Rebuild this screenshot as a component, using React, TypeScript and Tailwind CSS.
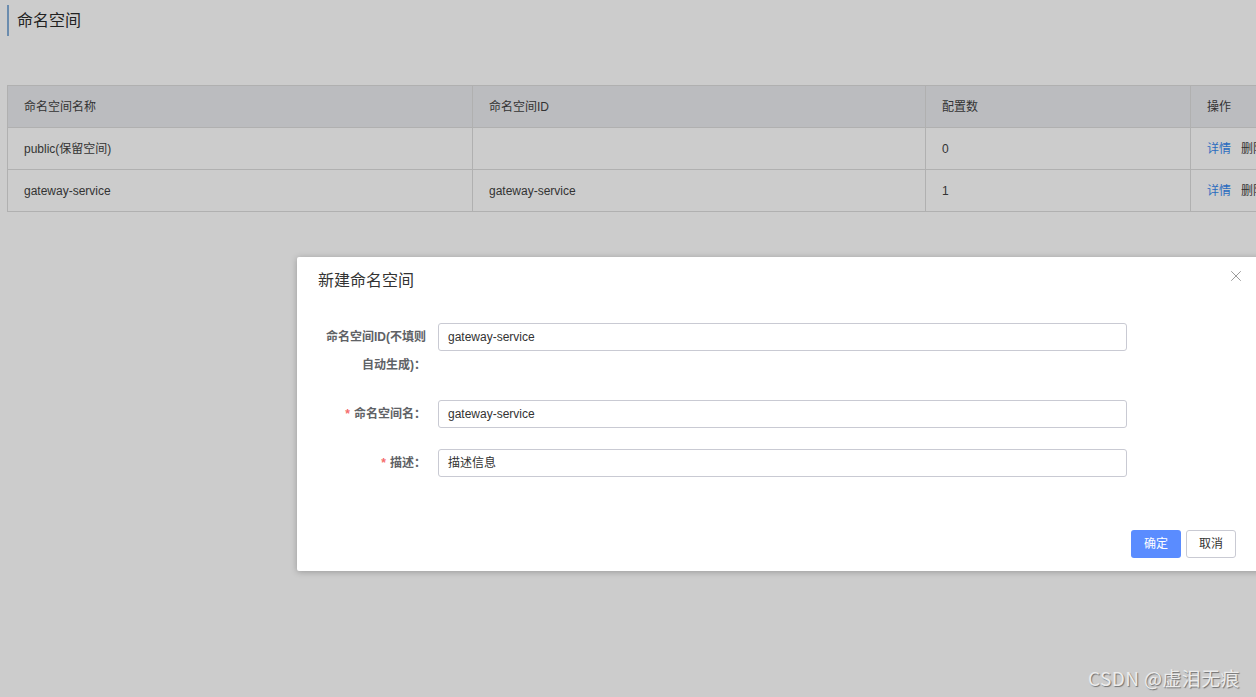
import { X } from "lucide-react";

const FONT = { fontFamily: '"Liberation Sans", "Noto Sans CJK SC", sans-serif' };

const rows = [
  { name: "public(保留空间)", id: "", count: "0" },
  { name: "gateway-service", id: "gateway-service", count: "1" },
];

function Field({ label, required, value }: { label: React.ReactNode; required?: boolean; value: string }) {
  return (
    <div className="flex items-start mb-[21px]">
      <div className="w-[119px] pr-[12px] text-right text-[12px] font-bold text-[#606266] leading-[28px]">
        {required && <span className="text-[#f56c6c] mr-[4px]">*</span>}
        {label}
      </div>
      <div className="w-[689px] h-[28px] border border-[#c9cad3] rounded-[3px] bg-white flex items-center px-[9px] text-[12px] text-[#333]">
        {value}
      </div>
    </div>
  );
}

export default function App() {
  return (
    <div className="relative w-[1256px] h-[697px] overflow-hidden bg-[#cccccc]" style={FONT}>
      {/* Page title */}
      <div className="pt-[5px] pl-[7px]">
        <div className="border-l-2 border-[#6b8cae] h-[31px] flex items-center pl-[8px] text-[16px] text-[#222]">命名空间</div>
      </div>

      {/* Table */}
      <div className="mt-[49px] ml-[7px] w-[1330px]">
        <table className="w-full border-collapse text-[12px] text-[#333] table-fixed">
          <colgroup>
            <col className="w-[465px]" />
            <col className="w-[453px]" />
            <col className="w-[265px]" />
            <col />
          </colgroup>
          <thead>
            <tr className="bg-[#bbbcbf] h-[42px]">
              {["命名空间名称", "命名空间ID", "配置数", "操作"].map((h) => (
                <th key={h} className="border border-[#b0b0b0] text-left font-normal pl-[16px]">{h}</th>
              ))}
            </tr>
          </thead>
          <tbody>
            {rows.map((r) => (
              <tr key={r.name} className="h-[42px]">
                <td className="border border-[#b0b0b0] pl-[16px]">{r.name}</td>
                <td className="border border-[#b0b0b0] pl-[16px]">{r.id}</td>
                <td className="border border-[#b0b0b0] pl-[16px]">{r.count}</td>
                <td className="border border-[#b0b0b0] pl-[16px]">
                  <span className="text-[#2a6bbf]">详情</span>
                  <span className="ml-[10px] text-[#333]">删除</span>
                </td>
              </tr>
            ))}
          </tbody>
        </table>
      </div>

      {/* Modal */}
      <div className="absolute left-[297px] top-[257px] w-[980px] h-[314px] bg-white rounded-[2px] shadow-[0_1px_6px_rgba(0,0,0,0.25)]">
        <div className="h-[48px] flex items-center pl-[21px] text-[16px] text-[#333] relative">
          新建命名空间
          <X className="absolute left-[930px] top-[10px] w-[18px] h-[18px] text-[#999]" strokeWidth={1.3} />
        </div>
        <div className="pt-[18px] pl-[22px]">
          <Field label={<>命名空间ID(不填则<br />自动生成)：</>} value="gateway-service" />
          <Field label="命名空间名：" required value="gateway-service" />
          <Field label="描述：" required value="描述信息" />
        </div>
        <div className="absolute left-[834px] top-[273px] flex gap-[5px]">
          <div className="w-[50px] h-[28px] rounded-[3px] bg-[#5a8cff] text-white text-[12px] flex items-center justify-center">确定</div>
          <div className="w-[50px] h-[28px] rounded-[3px] border border-[#c9cad3] bg-white text-[#333] text-[12px] flex items-center justify-center">取消</div>
        </div>
      </div>

      {/* Watermark */}
      <div className="absolute left-[1088px] top-[664px] text-[19px] tracking-[0.4px] text-[#ececec] [text-shadow:1px_1px_1px_rgba(0,0,0,0.45)]" style={{ fontFamily: '"Noto Sans CJK SC", sans-serif' }}>
        CSDN @虚泪无痕
      </div>
    </div>
  );
}
